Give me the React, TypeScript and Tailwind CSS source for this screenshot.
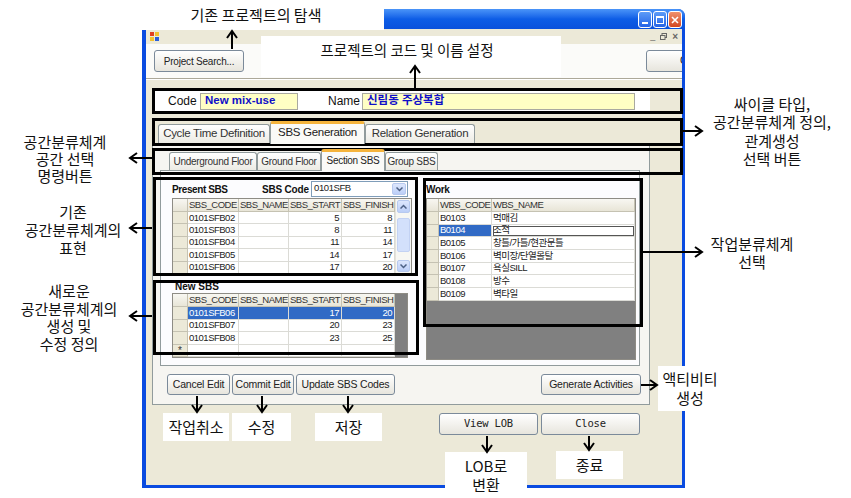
import React from "react";

const UI = "font-['Liberation_Sans','Noto_Sans_CJK_KR',sans-serif]";
const KO = "font-['Noto_Sans_CJK_KR',sans-serif]";

const presentRows = [
  ["0101SFB02", "", "5", "8"],
  ["0101SFB03", "", "8", "11"],
  ["0101SFB04", "", "11", "14"],
  ["0101SFB05", "", "14", "17"],
  ["0101SFB06", "", "17", "20"],
];
const newRows = [
  ["0101SFB06", "", "17", "20"],
  ["0101SFB07", "", "20", "23"],
  ["0101SFB08", "", "23", "25"],
];
const workRows = [
  ["B0103", "먹매김"],
  ["B0104", "조적"],
  ["B0105", "창틀/가틀/현관문틀"],
  ["B0106", "벽미장/단열몰탈"],
  ["B0107", "욕실SILL"],
  ["B0108", "방수"],
  ["B0109", "벽타일"],
];
const sbsCols = [
  { label: "SBS_CODE", w: "w-[51px]", right: false },
  { label: "SBS_NAME", w: "w-[50px]", right: false },
  { label: "SBS_START", w: "w-[53px]", right: true },
  { label: "SBS_FINISH", w: "w-[53px]", right: true },
];

function XpButton({ children, className }: { children: React.ReactNode; className: string }) {
  return (
    <div
      className={`flex shrink-0 items-center justify-center rounded-[3px] border border-[#7b8a9a] bg-gradient-to-b from-[#ffffff] to-[#e7e5dd] text-[10.5px] tracking-[-0.2px] text-[#222] ${className}`}
    >
      {children}
    </div>
  );
}

function CapBtn({ kind }: { kind: "min" | "max" | "close" }) {
  const bg =
    kind === "close"
      ? "bg-gradient-to-b from-[#f0906c] to-[#d2451f]"
      : "bg-gradient-to-b from-[#5c9bf7] to-[#2563e6]";
  return (
    <div className={`flex h-[17px] w-[14px] items-center justify-center rounded-[3px] border border-white ${bg}`}>
      {kind === "min" && <div className="mt-[7px] h-[2px] w-[6px] bg-white" />}
      {kind === "max" && <div className="h-[8px] w-[8px] border border-t-2 border-white" />}
      {kind === "close" && (
        <svg width="8" height="8" viewBox="0 0 8 8">
          <path d="M1 1L7 7M7 1L1 7" stroke="white" strokeWidth="1.6" />
        </svg>
      )}
    </div>
  );
}

function Tab({ label, w, active, small }: { label: string; w: string; active?: boolean; small?: boolean }) {
  const size = small ? "text-[10px]" : "text-[11.5px]";
  if (active) {
    return (
      <div
        className={`relative z-10 -mb-[1px] flex shrink-0 items-center justify-center rounded-t-[3px] border border-b-0 border-t-[3px] border-[#919b9c] border-t-[#f5b43c] bg-[#fafaf7] tracking-[-0.3px] text-[#222] ${size} ${w} ${small ? "h-[22px] pb-[2px]" : "h-[23px] pb-[3px]"}`}
      >
        {label}
      </div>
    );
  }
  return (
    <div
      className={`flex shrink-0 items-center justify-center rounded-t-[3px] border border-b-0 border-[#919b9c] bg-gradient-to-b from-[#ffffff] to-[#ecebe4] tracking-[-0.3px] text-[#333] ${size} ${w} ${small ? "h-[18px]" : "h-[19px]"}`}
    >
      {label}
    </div>
  );
}

function HeadCell({ w, children }: { w: string; children?: React.ReactNode }) {
  return (
    <div
      className={`flex h-full shrink-0 items-center overflow-hidden whitespace-nowrap border-r border-[#c5c2b2] bg-gradient-to-b from-[#f8f7f2] to-[#e8e5d7] px-[1px] text-[9.5px] tracking-[-0.5px] text-[#333] ${w}`}
    >
      {children}
    </div>
  );
}

function RowHead({ w, children }: { w: string; children?: React.ReactNode }) {
  return (
    <div
      className={`flex h-full shrink-0 items-center justify-center border-r border-b border-[#c5c2b2] bg-[#ece9d8] text-[10px] text-[#333] ${w}`}
    >
      {children}
    </div>
  );
}

function Cell({
  w,
  right,
  sel,
  edit,
  children,
}: {
  w: string;
  right?: boolean;
  sel?: boolean;
  edit?: boolean;
  children?: React.ReactNode;
}) {
  const tone = sel ? "bg-[#316ac5] text-white" : "bg-white text-[#222]";
  return (
    <div
      className={`flex h-full shrink-0 items-center overflow-hidden whitespace-nowrap border-r border-b border-[#dbdbd6] text-[9.5px] tracking-[-0.5px] ${right ? "justify-end pr-[2px]" : "pl-[1px]"} ${tone} ${w} ${edit ? "outline outline-1 -outline-offset-2 outline-[#555]" : ""}`}
    >
      {children}
    </div>
  );
}

function SbsHeader() {
  return (
    <div className="flex h-[13px] shrink-0 border-b border-[#c5c2b2]">
      <HeadCell w="w-[15px]" />
      {sbsCols.map((c) => (
        <HeadCell key={c.label} w={c.w}>
          {c.label}
        </HeadCell>
      ))}
    </div>
  );
}

function Chevron({ up }: { up?: boolean }) {
  return (
    <svg width="7" height="5" viewBox="0 0 7 5">
      <path d={up ? "M0.5 4.5L3.5 1.5L6.5 4.5" : "M0.5 0.5L3.5 3.5L6.5 0.5"} fill="none" stroke="#4d6185" strokeWidth="1.5" />
    </svg>
  );
}

function Scrollbar() {
  return (
    <div className="flex w-[16px] shrink-0 flex-col border-l border-[#e4e3dc] bg-[#f7f7f3] p-[1px]">
      <div className="flex h-[13px] items-center justify-center rounded-[2px] border border-[#b7c9ef] bg-gradient-to-b from-[#dde7fd] to-[#bccff8]">
        <Chevron up />
      </div>
      <div className="mt-[5px] h-[34px] rounded-[2px] border border-[#c3d2f3] bg-[#d3e0fb]" />
      <div className="flex-1" />
      <div className="flex h-[12px] items-center justify-center rounded-[2px] border border-[#b7c9ef] bg-gradient-to-b from-[#dde7fd] to-[#bccff8]">
        <Chevron />
      </div>
    </div>
  );
}

function PresentGrid() {
  return (
    <div className="mt-[1px] flex h-[76px] w-[240px] overflow-hidden border border-[#8e8c85] bg-white">
      <div className="flex w-[222px] flex-col">
        <SbsHeader />
        {presentRows.map((r) => (
          <div key={r[0]} className="flex h-[12.4px] shrink-0">
            <RowHead w="w-[15px]" />
            {sbsCols.map((c, i) => (
              <Cell key={c.label} w={c.w} right={c.right}>
                {r[i]}
              </Cell>
            ))}
          </div>
        ))}
      </div>
      <Scrollbar />
    </div>
  );
}

function NewGrid() {
  return (
    <div className="flex h-[65px] w-[236px] overflow-hidden border border-[#8e8c85] bg-[#808080]">
      <div className="flex w-[222px] flex-col bg-white">
        <SbsHeader />
        {newRows.map((r, ri) => (
          <div key={r[0]} className="flex h-[12.5px] shrink-0">
            <RowHead w="w-[15px]" />
            {sbsCols.map((c, i) => (
              <Cell key={c.label} w={c.w} right={c.right} sel={ri === 0}>
                {r[i]}
              </Cell>
            ))}
          </div>
        ))}
        <div className="flex h-[12.5px] shrink-0">
          <RowHead w="w-[15px]">*</RowHead>
          {sbsCols.map((c) => (
            <Cell key={c.label} w={c.w} />
          ))}
        </div>
      </div>
    </div>
  );
}

function WorkGrid() {
  return (
    <div className="mt-[1px] flex h-[162px] w-[210px] flex-col overflow-hidden border border-[#8e8c85] bg-[#808080]">
      <div className="flex flex-col bg-white">
        <div className="flex h-[13px] shrink-0 border-b border-[#c5c2b2]">
          <HeadCell w="w-[12px]" />
          <HeadCell w="w-[53px]">WBS_CODE</HeadCell>
          <HeadCell w="w-[143px]">WBS_NAME</HeadCell>
        </div>
        {workRows.map((r, i) => (
          <div key={r[0]} className="flex h-[12.7px] shrink-0">
            <RowHead w="w-[12px]" />
            <Cell w="w-[53px]" sel={i === 1}>
              {r[0]}
            </Cell>
            <Cell w="w-[143px]" edit={i === 1}>
              {r[1]}
            </Cell>
          </div>
        ))}
      </div>
    </div>
  );
}

function SbsCombo() {
  return (
    <div className="flex h-[16px] w-[97px] items-start justify-between border border-[#7f9db9] bg-white pl-[2px]">
      <span className="text-[9.5px] leading-[11px] tracking-[-0.4px] text-[#222]">0101SFB</span>
      <div className="mt-[1px] mr-[1px] flex h-[12px] w-[14px] items-center justify-center rounded-[2px] border border-[#b7c9ef] bg-gradient-to-b from-[#dde7fd] to-[#bccff8]">
        <Chevron />
      </div>
    </div>
  );
}

function SectionPage() {
  return (
    <div className="ml-[7px] flex h-[196px] w-[480px] shrink-0 border border-[#919b9c] bg-[#fcfcfe] pl-[11px] pt-[10px]">
      <div className="flex w-[240px] flex-col">
        <div className="flex h-[16px] items-center">
          <span className="w-[90px] text-[10px] font-bold tracking-[-0.4px] text-[#111]">Present SBS</span>
          <span className="w-[49px] text-[10px] font-bold tracking-[-0.2px] text-[#111]">SBS Code</span>
          <SbsCombo />
        </div>
        <PresentGrid />
        <div className="mt-[6px] flex h-[13px] items-center pl-[3px] text-[10px] font-bold text-[#111]">New SBS</div>
        <NewGrid />
      </div>
      <div className="ml-[14px] flex w-[210px] flex-col">
        <div className="flex h-[16px] items-center text-[10px] font-bold tracking-[-0.3px] text-[#111]">Work</div>
        <WorkGrid />
      </div>
    </div>
  );
}

function GenerationPage() {
  return (
    <div className="ml-[6px] flex h-[262px] w-[498px] shrink-0 flex-col border border-[#919b9c] bg-[#f6f5f1] pt-[5px]">
      <div className="flex h-[21px] shrink-0 items-end pl-[16px]">
        <Tab small label="Underground Floor" w="w-[88px]" />
        <Tab small label="Ground Floor" w="w-[64px]" />
        <Tab small active label="Section SBS" w="w-[64px]" />
        <Tab small label="Group SBS" w="w-[53px]" />
      </div>
      <SectionPage />
      <div className="mt-[8px] flex h-[21px] gap-[2px] pl-[14px] pr-[8px]">
        <XpButton className="h-[21px] w-[63px]">Cancel Edit</XpButton>
        <XpButton className="h-[21px] w-[62px]">Commit Edit</XpButton>
        <XpButton className="h-[21px] w-[99px]">Update SBS Codes</XpButton>
        <XpButton className="ml-auto h-[21px] w-[100px]">Generate Activities</XpButton>
      </div>
    </div>
  );
}

function Window() {
  return (
    <div className="flex h-[479px] w-[543px] flex-col overflow-hidden rounded-t-[7px] bg-[#0a4be0]">
      <div className="flex h-[20px] shrink-0 items-center justify-end gap-[1px] bg-gradient-to-b from-[#4a94f8] via-[#0d5de6] to-[#0a51dc] pr-[3px] pt-[1px]">
        <CapBtn kind="min" />
        <CapBtn kind="max" />
        <CapBtn kind="close" />
      </div>
      <div className="mb-[3px] ml-[4px] mr-[3px] flex flex-1 flex-col overflow-hidden bg-[#ece9d8]">
        {/* MDI bar */}
        <div className="flex h-[15px] shrink-0 items-center justify-between pl-[4px] pr-[4px]">
          <svg width="9" height="9" viewBox="0 0 9 9">
            <rect x="0" y="0" width="4" height="4" fill="#e04020" />
            <rect x="5" y="0" width="4" height="4" fill="#f2c230" />
            <rect x="0" y="5" width="4" height="4" fill="#f2c230" />
            <rect x="5" y="5" width="4" height="4" fill="#2a5ed8" />
          </svg>
          <div className="flex items-center gap-[5px] text-[9px] leading-none text-[#666]">
            <span>_</span>
            <svg width="7" height="7" viewBox="0 0 7 7">
              <rect x="2" y="0.5" width="4.5" height="4" fill="none" stroke="#666" />
              <rect x="0.5" y="2.5" width="4.5" height="4" fill="#ece9d8" stroke="#666" />
            </svg>
            <span className="text-[10px] font-bold">×</span>
          </div>
        </div>
        {/* toolbar */}
        <div className="flex h-[34px] shrink-0 overflow-hidden bg-[#fbfbf9] pl-[8px] pt-[6px]">
          <XpButton className="h-[22px] w-[90px] text-[10px]">Project Search...</XpButton>
          <XpButton className="-mr-[20px] ml-auto h-[22px] w-[56px] justify-start pl-[33px]">C</XpButton>
        </div>
        <div className="h-[2px] shrink-0 border-t border-b border-t-[#aca899] border-b-white" />
        {/* main */}
        <div className="flex flex-1">
          <div className="flex w-[504px] flex-col">
            <div className="ml-[6px] mt-[10px] flex h-[22px] items-center bg-white pl-[16px]">
              <span className="w-[32px] text-[12px] text-[#111]">Code</span>
              <div className="flex h-[17px] w-[98px] items-center border border-[#a9a9a0] bg-[#ffffc4] pl-[4px] text-[11.5px] font-bold text-[#1010c8]">
                New mix-use
              </div>
              <span className="ml-[30px] w-[34px] text-[12px] text-[#111]">Name</span>
              <div className="flex h-[17px] w-[273px] items-center border border-[#a9a9a0] bg-[#ffffc4] pl-[4px] text-[11.5px] font-bold text-[#1010c8]">
                신림동 주상복합
              </div>
            </div>
            <div className="mt-[9px] flex h-[22px] items-end pl-[12px]">
              <Tab label="Cycle Time Definition" w="w-[112px]" />
              <Tab active label="SBS Generation" w="w-[95px]" />
              <Tab label="Relation Generation" w="w-[110px]" />
            </div>
            <GenerationPage />
            <div className="ml-[293px] mt-[8px] flex gap-[3px] font-['DejaVu_Sans_Mono',monospace]">
              <XpButton className="h-[22px] w-[99px] text-[8.5px]">View LOB</XpButton>
              <XpButton className="h-[22px] w-[99px] text-[8.5px]">Close</XpButton>
            </div>
          </div>
          <div className="flex-1" />
        </div>
      </div>
    </div>
  );
}

function Arrow({ x1, y1, x2, y2 }: { x1: number; y1: number; x2: number; y2: number }) {
  const dx = x2 - x1;
  const dy = y2 - y1;
  const len = Math.hypot(dx, dy);
  const ux = dx / len;
  const uy = dy / len;
  const bx = x2 - ux * 7;
  const by = y2 - uy * 7;
  const px = -uy * 5;
  const py = ux * 5;
  return (
    <g>
      <line x1={x1} y1={y1} x2={x2 - ux} y2={y2 - uy} />
      <polyline points={`${bx + px},${by + py} ${x2},${y2} ${bx - px},${by - py}`} fill="none" />
    </g>
  );
}

const arrows = [
  [232, 49, 232, 31],
  [415, 88, 415, 66],
  [152, 158, 130, 158],
  [152, 228, 130, 228],
  [152, 316, 130, 316],
  [682, 131, 702, 131],
  [643, 252, 702, 252],
  [641, 385, 657, 385],
  [197, 396, 197, 412],
  [262, 396, 262, 412],
  [348, 396, 348, 412],
  [487, 436, 487, 452],
  [589, 436, 589, 450],
];

const boxes = [
  "left-[152px] top-[88px] h-[26px] w-[531px]",
  "left-[152px] top-[118px] h-[28px] w-[531px]",
  "left-[152px] top-[148px] h-[27px] w-[531px]",
  "left-[153px] top-[177px] h-[99px] w-[265px]",
  "left-[153px] top-[280px] h-[75px] w-[266px]",
  "left-[423px] top-[178px] h-[149px] w-[220px]",
];

function Annotations() {
  return (
    <div className={`pointer-events-none absolute inset-0 text-[15px] text-[#111] ${KO}`}>
      {boxes.map((b) => (
        <div key={b} className={`absolute border-[3px] border-black ${b}`} />
      ))}

      {/* white callouts laid over the window */}
      <div className="absolute left-[142px] top-0 flex h-[30px] w-[242px] items-center justify-center bg-white pr-[14px]">
        기존 프로젝트의 탐색
      </div>
      <div className="absolute left-[261px] top-[36px] flex h-[41px] w-[300px] items-start justify-center bg-white pr-[8px] pt-[3px] text-[14.5px]">
        프로젝트의 코드 및 이름 설정
      </div>
      <div className="absolute left-[163px] top-[413px] flex h-[28px] w-[66px] items-center justify-center bg-white">작업취소</div>
      <div className="absolute left-[232px] top-[413px] flex h-[28px] w-[59px] items-center justify-center bg-white">수정</div>
      <div className="absolute left-[315px] top-[413px] flex h-[28px] w-[67px] items-center justify-center bg-white">저장</div>
      <div className="absolute left-[445px] top-[452px] flex h-[46px] w-[82px] flex-col items-center bg-white pt-[4px] leading-[19px]">
        <span>LOB로</span>
        <span>변환</span>
      </div>
      <div className="absolute left-[556px] top-[451px] flex h-[28px] w-[67px] items-center justify-center bg-white">종료</div>
      <div className="absolute left-[658px] top-[366px] flex h-[45px] w-[64px] flex-col items-center bg-white pt-[3px] leading-[19px]">
        <span>액티비티</span>
        <span>생성</span>
      </div>

      {/* plain side labels */}
      <div className="absolute left-0 top-[133px] w-[130px] text-center leading-[17px]">
        공간분류체계
        <br />
        공간 선택
        <br />
        명령버튼
      </div>
      <div className="absolute left-[8px] top-[203px] w-[130px] text-center leading-[18px]">
        기존
        <br />
        공간분류체계의
        <br />
        표현
      </div>
      <div className="absolute left-[4px] top-[282px] w-[130px] text-center leading-[17.7px]">
        새로운
        <br />
        공간분류체계의
        <br />
        생성 및
        <br />
        수정 정의
      </div>
      <div className="absolute left-[702px] top-[95px] w-[140px] text-center leading-[18.3px]">
        싸이클 타입,
        <br />
        공간분류체계 정의,
        <br />
        관계생성
        <br />
        선택 버튼
      </div>
      <div className="absolute left-[697px] top-[235px] w-[110px] text-center leading-[18px]">
        작업분류체계
        <br />
        선택
      </div>

      <svg className="absolute left-0 top-0" width="851" height="498" stroke="#000" strokeWidth="2">
        {arrows.map((a, i) => (
          <Arrow key={i} x1={a[0]} y1={a[1]} x2={a[2]} y2={a[3]} />
        ))}
      </svg>
    </div>
  );
}

export default function App() {
  return (
    <div className={`relative h-[498px] w-[851px] overflow-hidden bg-white ${UI}`}>
      <div className="pl-[142px] pt-[9px]">
        <Window />
      </div>
      <Annotations />
    </div>
  );
}
